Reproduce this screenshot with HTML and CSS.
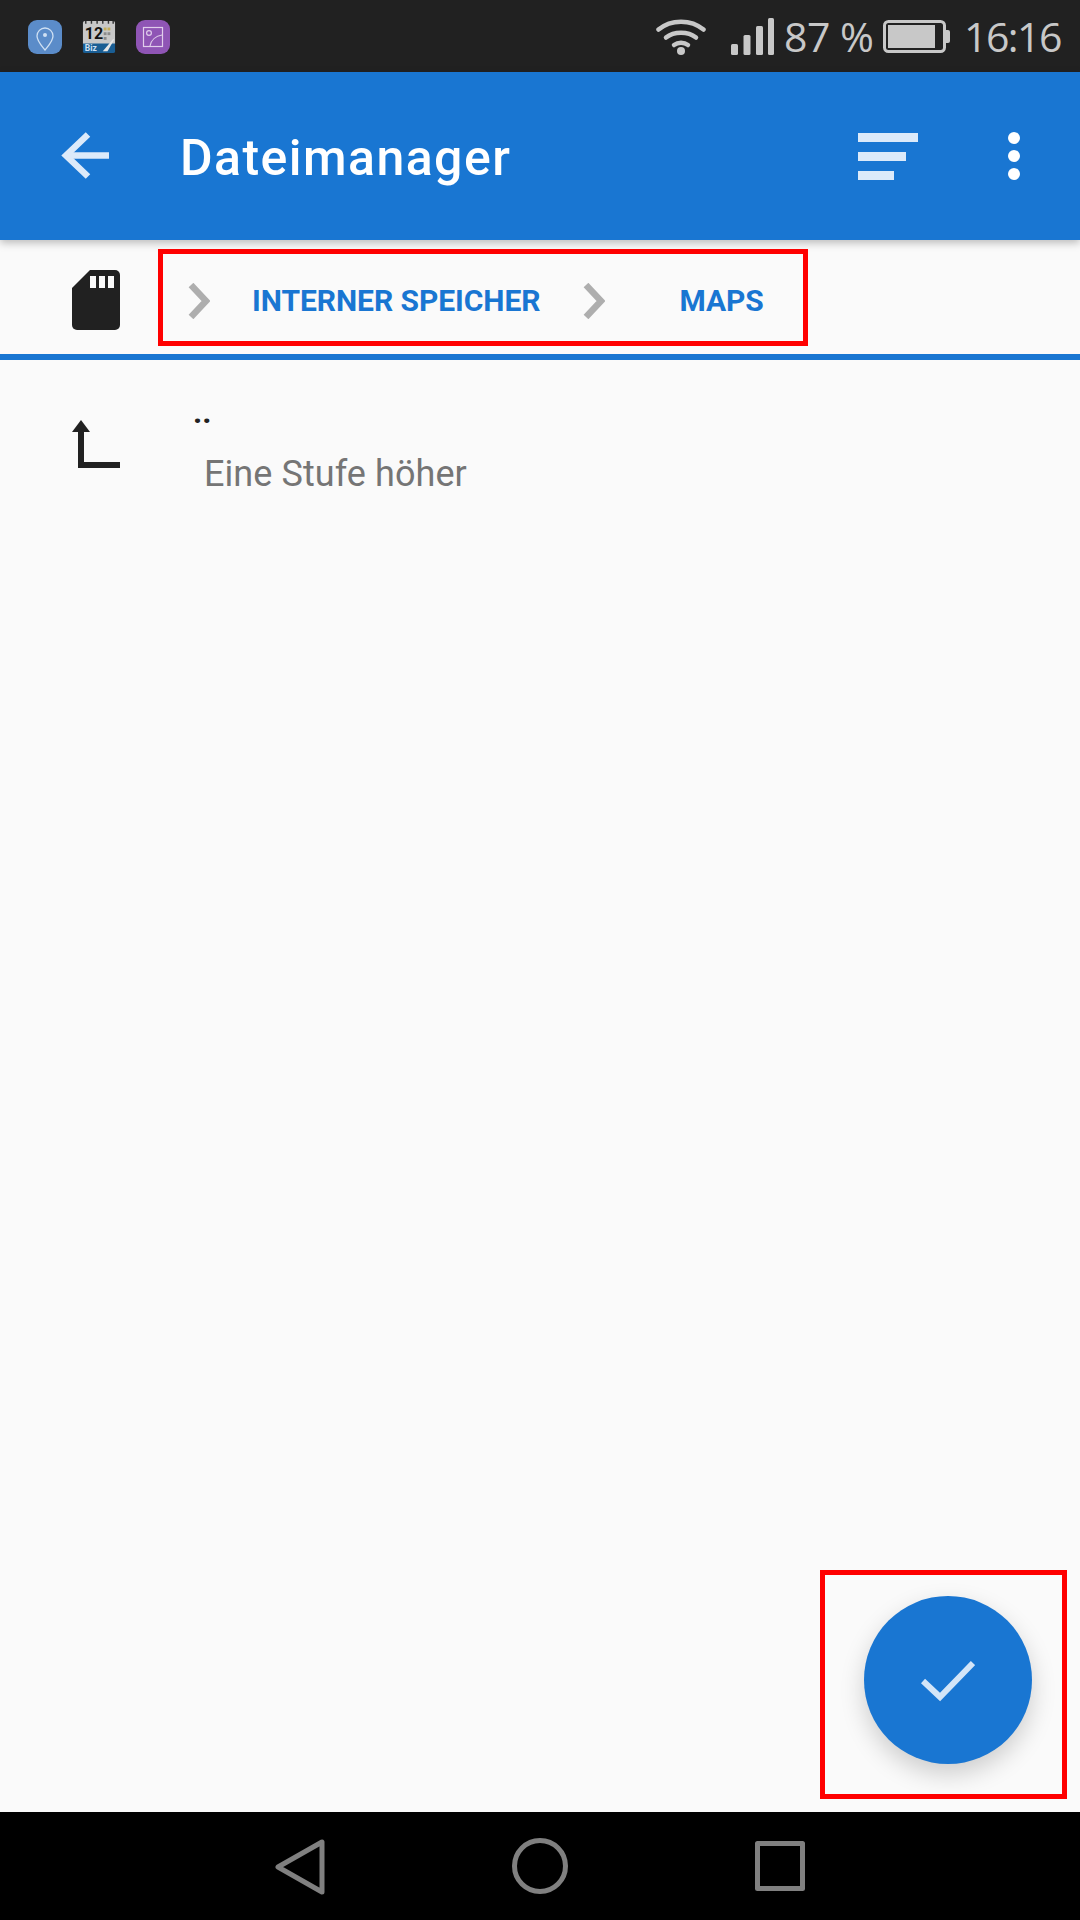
FILE: index.html
```html
<!DOCTYPE html>
<html lang="de">
<head>
  <meta charset="UTF-8">
  <title>Dateimanager</title>
  <link rel="stylesheet" href="styles.css">
</head>
<body>
  <div class="screen">
    <div class="statusbar">
      <div class="notif-icons">
        <svg width="34" height="34" viewBox="0 0 34 34">
          <rect width="34" height="34" rx="9" fill="#5b8cc9"/>
          <path d="M17 8a8 8 0 0 0-8 8c0 5 4 9 8 14 4-5 8-9 8-14a8 8 0 0 0-8-8z" fill="none" stroke="#cfe0f3" stroke-width="1.3"/>
          <circle cx="17" cy="15" r="2" fill="#cfe0f3"/>
        </svg>
        <svg width="34" height="34" viewBox="0 0 36 36">
          <rect x="1" y="1" width="34" height="26" rx="2" fill="#c8c8c8"/>
          <path d="M1 25h34v8a2 2 0 0 1-2 2H3a2 2 0 0 1-2-2z" fill="#1a5e94"/>
          <path d="M22 33l11-13 1 1-7 12z" fill="#e6e6e6"/>
          <rect x="23" y="8" width="3" height="3" fill="#c4ae5c"/><rect x="27" y="8" width="3" height="3" fill="#c4ae5c"/>
          <rect x="23" y="13" width="3" height="3" fill="#8b8b8b"/><rect x="27" y="13" width="3" height="3" fill="#8b8b8b"/>
          <rect x="23" y="18" width="3" height="3" fill="#8b8b8b"/>
          <path d="M4 1v3M10 1v3M16 1v3M22 1v3M28 1v3M33 1v3" stroke="#333" stroke-width="1.5"/>
          <text x="3" y="20" class="cal-day">12</text>
          <text x="3" y="33" class="cal-biz">Biz</text>
        </svg>
        <svg width="34" height="34" viewBox="0 0 34 34">
          <rect width="34" height="34" rx="9" fill="#8f55b5"/>
          <rect x="7.5" y="7.5" width="19" height="19" fill="none" stroke="#e0cdeb" stroke-width="1.2"/>
          <circle cx="13" cy="13" r="2.4" fill="none" stroke="#e0cdeb" stroke-width="1.2"/>
          <path d="M14 26c1-6 6-10 12-11" fill="none" stroke="#e0cdeb" stroke-width="1.2"/>
        </svg>
      </div>
      <div class="status-right">
        <svg class="wifi" width="50" height="37" viewBox="0 0 50 37" fill="none" stroke="#c8c8c8" stroke-linecap="round" stroke-width="4.5">
          <path d="M2.500 11.500C15 1 35 1 47.500 11.500"/>
          <path d="M10 19.500C18 13 32 13 40 19.500"/>
          <path d="M18 27c4-3 10-3 14 0"/>
          <circle cx="25" cy="33" r="4" fill="#c8c8c8" stroke="none"/>
        </svg>
        <svg class="signal" width="43" height="37" viewBox="0 0 43 37" fill="#c8c8c8">
          <rect x="0" y="26" width="7" height="11" rx="1.500"/>
          <rect x="12.500" y="17" width="7" height="20" rx="1.500"/>
          <rect x="25" y="8" width="7" height="29" rx="1.500"/>
          <rect x="37" y="0" width="6" height="37" rx="1.500"/>
        </svg>
        <span class="pct">87 %</span>
        <svg class="battery" width="67" height="33" viewBox="0 0 67 33">
          <rect x="1.500" y="1.500" width="60" height="30" rx="4" fill="none" stroke="#c8c8c8" stroke-width="3"/>
          <rect x="5" y="5" width="47" height="23" fill="#c8c8c8"/>
          <path d="M63 10h2a2 2 0 0 1 2 2v9a2 2 0 0 1-2 2h-2z" fill="#c8c8c8"/>
        </svg>
        <span class="clock">16:16</span>
      </div>
    </div>

    <div class="appbar">
      <svg class="back" width="48" height="48" viewBox="0 0 48 48" fill="none" stroke="#dceafa" stroke-width="6.500">
        <path d="M48 23.500H5"/>
        <path d="M27 2.500L5 23.500l22 21"/>
      </svg>
      <div class="title">Dateimanager</div>
      <div class="sort">
        <span class="sort-line w60"></span>
        <span class="sort-line w48"></span>
        <span class="sort-line w36"></span>
      </div>
      <div class="more">
        <span class="dot"></span>
        <span class="dot"></span>
        <span class="dot"></span>
      </div>
    </div>

    <div class="crumbs">
      <svg class="sdcard" width="48" height="60" viewBox="0 0 48 60">
        <path d="M18 0h25a5 5 0 0 1 5 5v50a5 5 0 0 1-5 5H5a5 5 0 0 1-5-5V18z" fill="#212121"/>
        <rect x="18" y="6" width="6" height="12" fill="#fafafa"/>
        <rect x="27" y="6" width="6" height="12" fill="#fafafa"/>
        <rect x="36" y="6" width="6" height="12" fill="#fafafa"/>
      </svg>
      <div class="crumb-box">
        <svg class="chev" width="22" height="36" viewBox="0 0 22 36" fill="none" stroke="#aeaeae" stroke-width="6.500"><path d="M3 2l15 16L3 34"/></svg>
        <span class="crumb first">INTERNER SPEICHER</span>
        <svg class="chev" width="22" height="36" viewBox="0 0 22 36" fill="none" stroke="#aeaeae" stroke-width="6.500"><path d="M3 2l15 16L3 34"/></svg>
        <span class="crumb last">MAPS</span>
      </div>
    </div>

    <div class="list">
      <div class="row">
        <svg class="up" width="48" height="48" viewBox="0 0 48 48" fill="#212121">
          <path d="M9 0l9 12H0z"/>
          <path d="M6 10h6v32h36v6H6z"/>
        </svg>
        <div class="row-text">
          <div class="row-name">..</div>
          <div class="row-sub">Eine Stufe höher</div>
        </div>
      </div>
    </div>

    <div class="navbar">
      <svg width="50" height="56" viewBox="0 0 50 56" fill="none" stroke="#808080" stroke-width="5" stroke-linejoin="round"><path d="M47 3v50L3 28z"/></svg>
      <svg width="56" height="56" viewBox="0 0 56 56" fill="none" stroke="#808080" stroke-width="5"><circle cx="28" cy="28" r="25.500"/></svg>
      <svg width="50" height="50" viewBox="0 0 50 50" fill="none" stroke="#808080" stroke-width="5" stroke-linejoin="round"><rect x="2.500" y="2.500" width="45" height="45"/></svg>
    </div>

    <div class="fab-box">
      <div class="fab">
        <svg class="check" width="54" height="42" viewBox="0 0 54 42" fill="none" stroke="#d3e5f8" stroke-width="6"><path d="M2 21l17 16L52 3"/></svg>
      </div>
    </div>
  </div>
</body>
</html>
```

FILE: styles.css
```css
* { box-sizing: border-box; }
html, body { margin: 0; padding: 0; }
body { font-family: Roboto, sans-serif; background: #fafafa; }
svg { display: block; flex: none; }

.screen { position: relative; width: 1080px; height: 1920px; display: flex; flex-direction: column; overflow: hidden; }

.statusbar { height: 72px; background: #212121; display: flex; align-items: center; justify-content: space-between; padding: 0 19px 0 28px; flex: none; }
.notif-icons { display: flex; align-items: center; gap: 20px; margin-top: 2px; }
.cal-day { font: 700 17px Roboto, sans-serif; fill: #111; }
.cal-biz { font: 700 9px Roboto, sans-serif; fill: #cfe0f3; }
.status-right { display: flex; align-items: center; color: #c8c8c8; font-family: "Open Sans", sans-serif; font-weight: 400; font-size: 41px; }
.wifi { margin-right: 25px; margin-top: 1px; }
.signal { margin-right: 10px; margin-top: 1px; }
.pct { width: 99px; white-space: nowrap; letter-spacing: -0.5px; }
.battery { margin-right: 14px; }
.clock { letter-spacing: -1.5px; }

.appbar { height: 168px; background: #1976d2; display: flex; align-items: center; padding: 0 60px 0 61px; flex: none; position: relative; z-index: 2; box-shadow: 0 3px 8px rgba(0,0,0,.25); }
.title { margin-left: 71px; margin-top: 4px; color: #fff; font-size: 50px; font-weight: 500; letter-spacing: 1.45px; flex: 1; }
.sort { display: flex; flex-direction: column; gap: 10px; width: 60px; margin-right: 90px; }
.sort-line { display: block; height: 9px; background: #dceafa; }
.w60 { width: 60px; }
.w48 { width: 48px; }
.w36 { width: 36px; }
.more { display: flex; flex-direction: column; gap: 6px; }
.dot { display: block; width: 12px; height: 12px; border-radius: 50%; background: #fff; }

.crumbs { height: 120px; display: flex; align-items: flex-start; padding: 9px 0 0 72px; border-bottom: 6px solid #1976d2; flex: none; }
.sdcard { margin-top: 21px; }
.crumb-box { margin-left: 38px; width: 650px; height: 97px; border: 5px solid #f00; display: flex; align-items: center; padding: 6px 0 0 25px; }
.crumb { color: #1976d2; font-size: 30px; font-weight: 700; letter-spacing: -0.05px; white-space: nowrap; }
.first { margin-left: 42px; margin-right: 43px; }
.last { margin-left: 74px; }

.list { flex: 1; }
.row { display: flex; align-items: flex-start; padding: 36px 0 0 72px; }
.up { margin-top: 24px; }
.row-text { margin-left: 74px; }
.row-name { color: #212121; font-size: 32px; line-height: 32px; font-weight: 700; height: 58px; margin-left: -1px; }
.row-sub { color: #757575; font-size: 36px; line-height: 40px; margin-left: 10px; letter-spacing: 0.07px; }

.navbar { height: 108px; background: #000; display: flex; align-items: flex-start; padding: 27px 0 0 275px; flex: none; }
.navbar svg:nth-child(2) { margin-left: 187px; margin-top: -1px; }
.navbar svg:nth-child(3) { margin-left: 187px; margin-top: 2px; }

/* frame round the fab, lies over the list */
.fab-box { position: absolute; left: 820px; top: 1570px; width: 247px; height: 229px; border: 5px solid #f00; }
.fab { position: absolute; left: 39px; top: 21px; width: 168px; height: 168px; border-radius: 50%; background: #1976d2; display: flex; align-items: center; justify-content: center; box-shadow: 0 10px 24px rgba(0,0,0,.18); }
.check { margin-top: 2px; }
```
